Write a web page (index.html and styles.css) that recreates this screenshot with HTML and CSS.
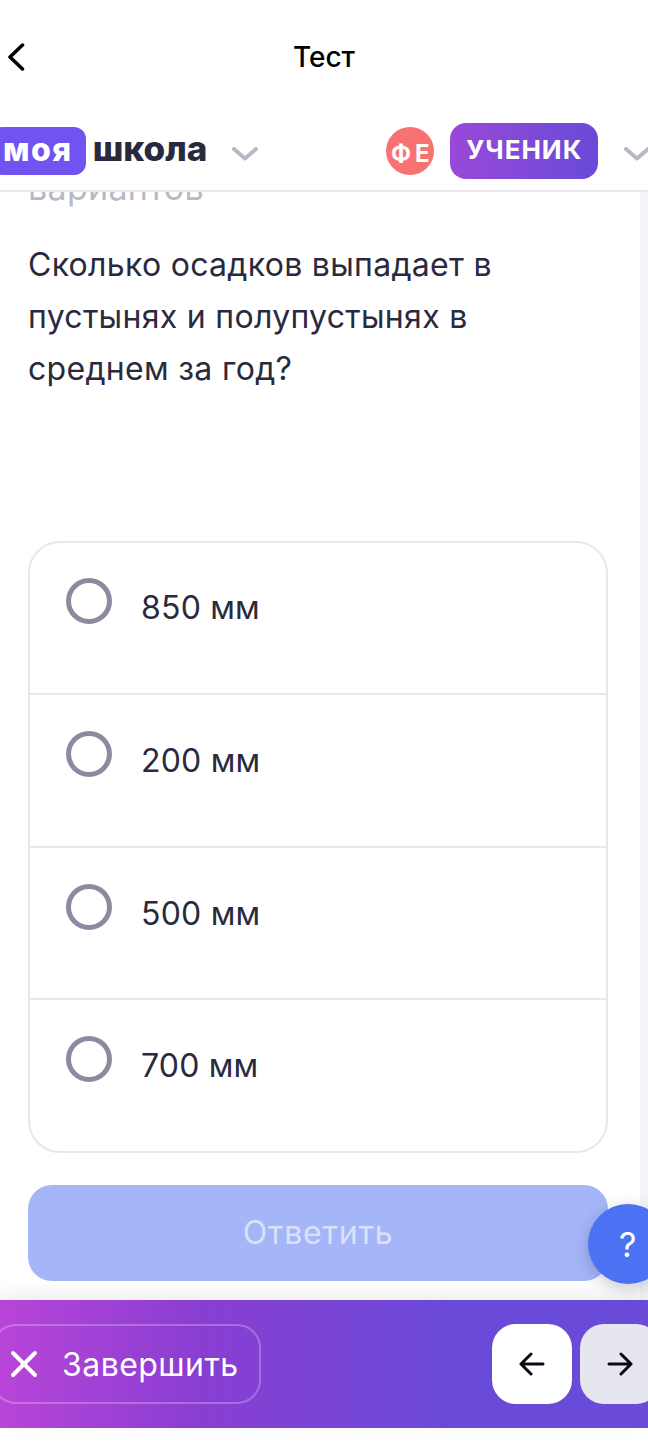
FILE: index.html
```html
<!DOCTYPE html>
<html lang="ru">
<head>
<meta charset="utf-8">
<title>Тест</title>
<link rel="stylesheet" href="styles.css">
</head>
<body>
<div class="page">
  <header class="topbar">
    <svg class="back" width="18" height="28" viewBox="0 0 18 28"><path d="M15.500 2 L3 14 L15.500 26" fill="none" stroke="#000" stroke-width="3.500" stroke-linecap="round" stroke-linejoin="round"/></svg>
    <h1 class="title">Тест</h1>
  </header>
  <div class="schoolbar">
    <div class="logo"><span class="logo-badge">моя</span><span class="logo-text">школа</span></div>
    <svg class="chev chev-left" width="26" height="14" viewBox="0 0 26 14"><path d="M2 2 L13 11.500 L24 2" fill="none" stroke="#b9b9c6" stroke-width="4" stroke-linecap="round" stroke-linejoin="round"/></svg>
    <span class="avatar">ФЕ</span>
    <span class="role">УЧЕНИК</span>
    <svg class="chev chev-right" width="26" height="14" viewBox="0 0 26 14"><path d="M2 2 L13 11.500 L24 2" fill="none" stroke="#b9b9c6" stroke-width="4" stroke-linecap="round" stroke-linejoin="round"/></svg>
  </div>
  <main class="scroller">
    <div class="content">
      <p class="hint">вариантов</p>
      <p class="question">Сколько осадков выпадает в пустынях и полупустынях в среднем за год?</p>
      <ul class="options">
        <li class="option"><span class="radio"></span><span class="label">850 мм</span></li>
        <li class="option"><span class="radio"></span><span class="label">200 мм</span></li>
        <li class="option"><span class="radio"></span><span class="label">500 мм</span></li>
        <li class="option"><span class="radio"></span><span class="label">700 мм</span></li>
      </ul>
      <button class="submit">Ответить</button>
    </div>
    <div class="track"></div>
    <button class="help">?</button>
  </main>
  <footer class="bottombar">
    <button class="finish">
      <svg width="28" height="28" viewBox="0 0 28 28"><path d="M3 3 L25 25 M25 3 L3 25" fill="none" stroke="#fff" stroke-width="4" stroke-linecap="round"/></svg>
      <span>Завершить</span>
    </button>
    <div class="navs">
      <button class="nav nav-prev"><svg width="26" height="24" viewBox="0 0 26 24"><path d="M24 12 H2 M12 2 L2 12 L12 22" fill="none" stroke="#0a0a14" stroke-width="3" stroke-linecap="round" stroke-linejoin="round"/></svg></button>
      <button class="nav nav-next"><svg width="26" height="24" viewBox="0 0 26 24"><path d="M2 12 H24 M14 2 L24 12 L14 22" fill="none" stroke="#0a0a14" stroke-width="3" stroke-linecap="round" stroke-linejoin="round"/></svg></button>
    </div>
  </footer>
</div>
</body>
</html>
```
FILE: styles.css
```css
* { box-sizing: border-box; }
html, body { margin: 0; padding: 0; }
body { font-family: Inter, "Liberation Sans", sans-serif; background: #fff; color: #2a2a3e; }
button { font-family: inherit; border: 0; padding: 0; }
.page { width: 648px; height: 1443px; overflow: hidden; display: flex; flex-direction: column; background: #fff; }

.topbar { height: 112px; flex: none; display: flex; align-items: center; justify-content: center; position: relative; background: #fff; }
.back { position: absolute; left: 7px; top: 43px; }
.title { margin: 2px 0 0; font-size: 28px; font-weight: 500; color: #000; line-height: 34px; }

.schoolbar { height: 80px; flex: none; display: flex; align-items: flex-start; background: #fff; border-bottom: 2px solid #e8e8ee; position: relative; z-index: 2; padding-top: 11px; }
.logo { display: flex; align-items: flex-start; margin-left: -10px; margin-top: 4px; height: 48px; }
.logo-badge { background: #7153f2; color: #fff; font-weight: 800; font-size: 32px; line-height: 46px; height: 48px; padding: 0 13px; border-radius: 12px; letter-spacing: 1.500px; }
.logo-text { margin-left: 7px; font-size: 35px; font-weight: 800; line-height: 42px; color: #2a2a3e; }
.chev { flex: none; margin-top: 24px; }
.chev-left { margin-left: 25px; }
.avatar { margin-left: 128px; margin-top: 4px; width: 48px; height: 48px; border-radius: 50%; background: #f87272; color: #fff; font-weight: 700; font-size: 24px; letter-spacing: 4px; display: flex; align-items: center; justify-content: center; padding: 4px 0 0 4px; flex: none; }
.role { margin-left: 16px; width: 148px; height: 56px; border-radius: 16px; background: linear-gradient(90deg, #9a48d8, #684bd8); color: #fff; font-weight: 700; font-size: 26px; letter-spacing: 1px; display: flex; align-items: center; justify-content: center; padding-bottom: 3px; flex: none; }
.chev-right { margin-left: 26px; }

.scroller { flex: 1; min-height: 0; position: relative; overflow: hidden; }
.content { padding: 0 40px 0 28px; }
.hint { margin: -30px 0 0; font-size: 34px; line-height: 52px; letter-spacing: .3px; color: #b9b9c6; }
.question { margin: 24px 0 0; max-width: 500px; padding-top: 1px; font-size: 32px; line-height: 52px; letter-spacing: .3px; color: #2a2a3e; }
.options { list-style: none; margin: 146px 0 0; padding: 0; border: 2px solid #e8e8ec; border-radius: 32px; }
.option { height: 152.5px; display: flex; align-items: flex-start; padding: 36px 0 0 36px; border-top: 2px solid #e8e8ec; }
.option:first-child { height: 150px; padding-top: 35px; border-top: 0; }
.radio { width: 46px; height: 46px; border: 5px solid #8a8b9e; border-radius: 50%; flex: none; }
.label { margin-left: 29px; margin-top: 6px; font-size: 32px; line-height: 48px; letter-spacing: .2px; }
.submit { display: block; width: 100%; height: 96px; margin-top: 32.5px; padding-bottom: 2px; border-radius: 24px; background: #a5b6f8; color: #d9e0fc; font-size: 32px; letter-spacing: .8px; }
.track { position: absolute; top: 0; right: 0; bottom: 0; width: 8px; background: #f5f5f9; }
.help { position: absolute; left: 588px; top: 1012px; width: 80px; height: 80px; border-radius: 50%; background: #4a72f2; color: #fff; font-size: 34px; box-shadow: 0 4px 16px rgba(40, 40, 70, .25); text-align: left; padding-left: 31px; }

.bottombar { height: 128px; margin-bottom: 15px; flex: none; display: flex; align-items: center; justify-content: space-between; background: linear-gradient(90deg, #b845d8 0%, #8a3ed2 30%, #6a4ad8 70%, #6a4ad8 100%); box-shadow: 0 -6px 16px rgba(40, 40, 70, .08); position: relative; z-index: 2; }
.finish { margin-left: -8px; width: 269px; height: 80px; border: 2px solid rgba(255, 255, 255, .25); border-radius: 24px; background: transparent; color: #fff; display: flex; align-items: center; font-size: 32px; letter-spacing: .45px; padding-left: 16px; }
.finish span { margin-left: 24px; }
.navs { display: flex; gap: 8px; margin-right: -12px; }
.nav { width: 80px; height: 80px; border-radius: 24px; display: flex; align-items: center; justify-content: center; }
.nav-prev { background: #fff; }
.nav-next { background: #e6e6ee; }
```
